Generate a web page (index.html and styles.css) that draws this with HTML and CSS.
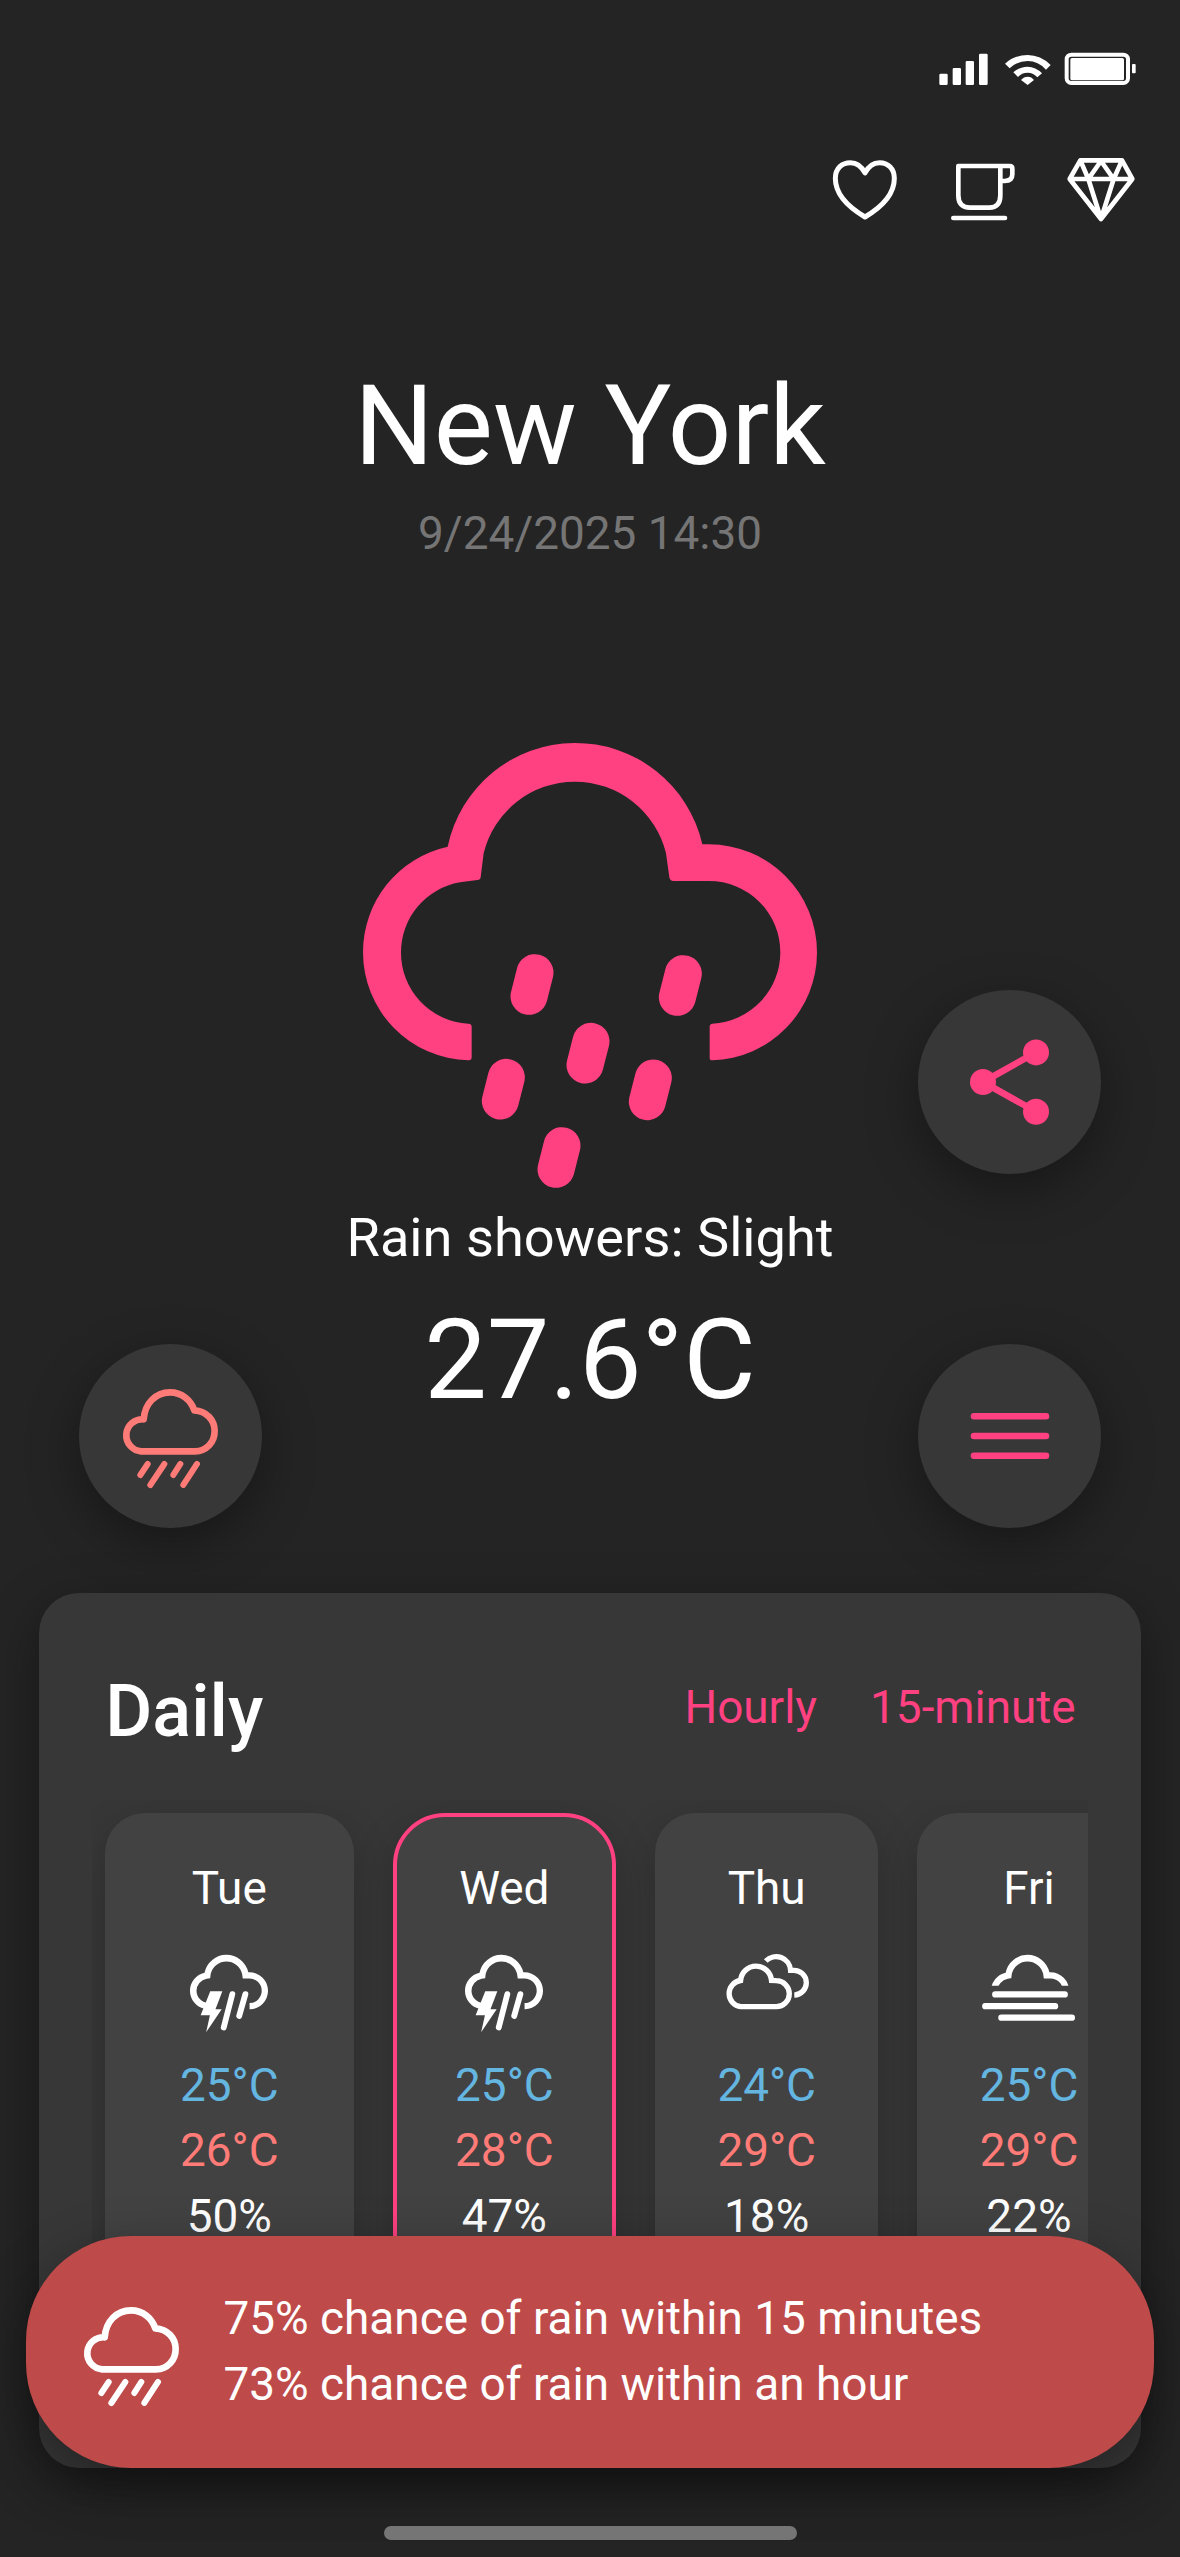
FILE: index.html
```html
<!DOCTYPE html>
<html lang="en">
<head>
<meta charset="utf-8">
<title>Weather</title>
<link rel="stylesheet" href="styles.css">
</head>
<body>
<svg class="defs" width="0" height="0">
  <defs>
    <clipPath id="above-fog"><rect x="0" y="0" width="1500" height="608"/></clipPath>
    <path id="cloud" d="M323 380A391 391 0 0 1 1087 373H1107A324 324 0 0 1 1431 697A324 324 0 0 1 1117 1021Q1109 1021 1109 1013V920Q1109 912 1117 911A214.500 214.500 0 0 0 1321 697A214 214 0 0 0 1107 483H1000Q990 483 988 472L978 400A281.500 281.500 0 0 0 431 400L422 472Q421 480 412 480L360 487A213 213 0 0 0 183 697A213 213 0 0 0 385 911Q395 911 395 920V1012Q395 1022 385 1021A324 324 0 0 1 69 697A324 324 0 0 1 323 380Z"/>
    <path id="cloud-storm" d="M323 380A391 391 0 0 1 1087 373H1107A324 324 0 0 1 1431 697A324 324 0 0 1 1117 1021H1109V911A214.500 214.500 0 0 0 1321 697A214 214 0 0 0 1107 483H990L978 400A281.500 281.500 0 0 0 431 400L421 480L360 487A213 213 0 0 0 183 697A213 213 0 0 0 380 909L320 1012A324 324 0 0 1 69 697A324 324 0 0 1 323 380Z"/>
    <symbol id="storm" viewBox="17 20 1466 1466">
      <use href="#cloud-storm"/>
      <path d="M423 707H634L514 1020H622L351 1422L417 1126H255Z"/>
      <path class="line" stroke-width="102" d="M808 755L658 1336M1036 755L928 1135"/>
    </symbol>
    <symbol id="rain" viewBox="180 200 300 310">
      <path class="line" stroke-width="20" d="M243 393A48 48 0 0 1 251 297C254 250 286 216 330 216C366 216 393 240 403 270C440 272 464 300 464 332C464 365 440 393 405 393Z"/>
      <path class="line" stroke-width="18" d="M263 431L241 464M313 431L271 494M361 431L340 464M411 431L370 494"/>
    </symbol>
  </defs>
</svg>
<div class="screen">
  <div class="status">
    <svg width="206" height="36" viewBox="412 93 618 108">
      <path d="M419 165q0-4 4-4h17q4 0 4 4v26q0 4-4 4h-17q-4 0-4-4zM459 148q0-4 4-4h17q4 0 4 4v43q0 4-4 4h-17q-4 0-4-4zM498 127q0-4 4-4h17q4 0 4 4v64q0 4-4 4h-17q-4 0-4-4zM538 105q0-4 4-4h18q4 0 4 4v86q0 4-4 4h-18q-4 0-4-4z"/>
      <path d="M616 131Q645 105 684 105T753 135L739 149Q716 123 684 123T630 145ZM641 157Q660 140 684 140T727 160L713 172Q702 158 684 158T655 171ZM664 180Q672 170 684 170T703 180L684 195Z"/>
      <rect class="line" x="801" y="104" width="184" height="85" rx="14" stroke-width="12"/>
      <rect x="812" y="114" width="161" height="67" rx="5"/>
      <rect x="997" y="132" width="11" height="28" rx="3"/>
    </svg>
  </div>
  <header class="actions">
    <svg width="68" height="66" viewBox="94 412 204 198"><path class="line" stroke-width="15" d="M196 592C150 565 107 525 107 476C107 445 128 429 152 429C172 429 187 442 196 460C205 442 220 429 240 429C264 429 284 446 284 476C284 525 242 565 196 592Z"/></svg>
    <svg width="68" height="66" viewBox="449 412 204 198"><path class="line" stroke-width="14" d="M603 484H616Q639 484 639 464V447Q639 439 631 439H477V527Q477 564 512 564H570Q603 564 603 527V439M462 595H617"/></svg>
    <svg width="68" height="66" viewBox="802 412 204 198"><path class="line" stroke-width="14" d="M842 422H967L998 478L904 598L810 478ZM810 478H998M842 422L866 478L904 598L942 478L967 422M866 478L904 424L942 478"/></svg>
  </header>
  <h1 class="city">New York</h1>
  <p class="date">9/24/2025 14:30</p>

  <main class="hero">
    <div class="side">
      <button class="fab warm" aria-label="Rain alert"><svg width="100" height="103.300"><use href="#rain"/></svg></button>
    </div>
    <div class="current">
      <svg class="current-icon" width="500" height="486" viewBox="0 0 1500 1458">
        <use href="#cloud"/>
        <path class="line" stroke-width="111" d="M585 758L567 829M1030 761L1012 832M753 964L735 1035M499 1072L481 1143M940 1074L922 1145M666 1277L648 1348"/>
      </svg>
      <p class="condition">Rain showers: Slight</p>
      <p class="temp">27.6°C</p>
    </div>
    <div class="side">
      <button class="fab share" aria-label="Share">
        <svg width="80" height="86" viewBox="0 0 80 86"><circle cx="13" cy="43" r="13"/><circle cx="66" cy="13.400" r="13"/><circle cx="66" cy="72.700" r="13"/><path class="line" stroke-width="6.600" d="M66 13.400L13 43L66 72.700"/></svg>
      </button>
      <button class="fab" aria-label="Menu">
        <svg width="80" height="46" viewBox="0 0 80 46"><path class="line" stroke-width="6.600" d="M4 3.300H76M4 23H76M4 42.700H76"/></svg>
      </button>
    </div>
  </main>

  <section class="panel">
    <div class="panel-head">
      <h2>Daily</h2>
      <nav class="tabs"><a>Hourly</a><a>15-minute</a></nav>
    </div>
    <div class="days">
      <article class="day first">
        <p>Tue</p>
        <svg width="84" height="84"><use href="#storm"/></svg>
        <p class="low">25°C</p><p class="high">26°C</p><p>50%</p>
      </article>
      <article class="day today">
        <p>Wed</p>
        <svg width="84" height="84"><use href="#storm"/></svg>
        <p class="low">25°C</p><p class="high">28°C</p><p>47%</p>
      </article>
      <article class="day">
        <p>Thu</p>
        <svg width="90" height="84" viewBox="101.700 52.300 90 84"><path class="line flat" stroke-width="5.300" d="M120.300 80.800A15.500 15.700 0 0 1 151.200 80.800L156 81A13 13 0 0 1 156 107H120.500A13.200 13.200 0 0 1 120.300 80.800ZM145.500 61.300A14.500 14.500 0 0 1 170.300 70.600H173.200A12.400 12.400 0 0 1 174 95.400"/></svg>
        <p class="low">24°C</p><p class="high">29°C</p><p>18%</p>
      </article>
      <article class="day">
        <p>Fri</p>
        <svg width="84" height="84" viewBox="-2 20 1466 1466"><use href="#cloud" clip-path="url(#above-fog)"/><path class="line" stroke-width="110" d="M142 760H1355M-32 965H1186M249 1166H1479"/></svg>
        <p class="low">25°C</p><p class="high">29°C</p><p>22%</p>
      </article>
    </div>
  </section>

  <div class="alert">
    <svg width="100" height="103.300"><use href="#rain"/></svg>
    <div><p>75% chance of rain within 15 minutes</p><p>73% chance of rain within an hour</p></div>
  </div>
  <div class="home-bar"></div>
</div>
</body>
</html>
```
FILE: styles.css
```css
* { box-sizing: border-box; margin: 0; padding: 0; }
body {
  background: #242424;
  color: #fff;
  font-family: Roboto, "Liberation Sans", sans-serif;
  font-size: 45.9px;
  font-weight: 400;
  line-height: 65.6px;
}
svg { display: block; overflow: visible; fill: currentColor; flex: none; }
.defs { position: absolute; }
.line { fill: none; stroke: currentColor; stroke-linecap: round; stroke-linejoin: round; }
.line.flat { stroke-linecap: butt; stroke-linejoin: miter; }

.screen {
  position: relative;
  width: 1180px;
  height: 2557px;
  overflow: hidden;
  display: flex;
  flex-direction: column;
}
.status { display: flex; justify-content: flex-end; padding: 51px 36.7px 0 0; }
.actions {
  display: flex;
  justify-content: flex-end;
  gap: 50px;
  padding: 70.3px 44.7px 0 0;
}
.city {
  margin-top: 136.7px;
  font-size: 111.5px;
  line-height: 132px;
  font-weight: 400;
  text-align: center;
}
.date { margin-top: 8.6px; color: #757575; text-align: center; }

.hero {
  display: grid;
  grid-template-columns: 183.5px 1fr 183.5px;
  height: 807.6px;
  margin-top: 153.8px;
  padding: 0 78.6px;
}
.side {
  display: flex;
  flex-direction: column;
  justify-content: flex-end;
  gap: 170.3px;
}
.fab {
  display: flex;
  align-items: center;
  justify-content: center;
  width: 183.5px;
  height: 183.5px;
  border: 0;
  border-radius: 50%;
  background: #373737;
  color: #ff4081;
  box-shadow: 0 16px 52px rgba(0, 0, 0, .36);
}
.fab.warm { padding-top: 5px; color: #ff7b77; }
.current { display: flex; flex-direction: column; align-items: center; }
.current-icon { color: #ff4081; }
.condition { font-size: 54.2px; line-height: 66px; margin-top: -.6px; white-space: nowrap; }
.temp { margin-top: 23px; font-size: 111.5px; line-height: 132px; }

.panel {
  height: 875px;
  margin: 65.4px 39.3px 0;
  padding: 76.4px 52.7px 0;
  border-radius: 40px;
  background: #373737;
  box-shadow: 0 16px 52px rgba(0, 0, 0, .36);
}
.panel-head {
  display: flex;
  justify-content: space-between;
  height: 130.6px;
  padding: 0 12.3px 0 13.3px;
}
h2 { font-size: 72.1px; line-height: 86.600px; font-weight: 500; }
.tabs { display: flex; gap: 53px; padding-top: 5.6px; color: #ff4081; }
.days {
  display: flex;
  gap: 39.3px;
  height: 655px;
  padding: 13px 13px 0;
  overflow: hidden;
}
.day {
  flex: none;
  display: flex;
  flex-direction: column;
  align-items: center;
  width: 223px;
  height: 590px;
  padding-top: 42.8px;
  border-radius: 40px;
  background: #424242;
  box-shadow: 0 13px 40px rgba(0, 0, 0, .2);
}
.day.first { width: 248.6px; }
.day.today { padding-top: 38.8px; border: 4px solid #ff4081; border-radius: 52px; }
.day svg { margin: 31px 0 16.3px; }
.low { color: #64b5e0; }
.high { color: #ff7b77; }

.alert {
  position: absolute;
  left: 26px;
  right: 26px;
  top: 2235.7px;
  height: 232.6px;
  display: flex;
  align-items: center;
  gap: 43px;
  padding-left: 54.5px;
  border-radius: 105px;
  background: #be4a49;
  box-shadow: 0 16px 52px rgba(0, 0, 0, .36);
  white-space: nowrap;
}
.alert svg { margin-top: 9px; }
.home-bar {
  position: absolute;
  left: 384px;
  top: 2526px;
  width: 413px;
  height: 14px;
  border-radius: 7px;
  background: #757575;
}
```
